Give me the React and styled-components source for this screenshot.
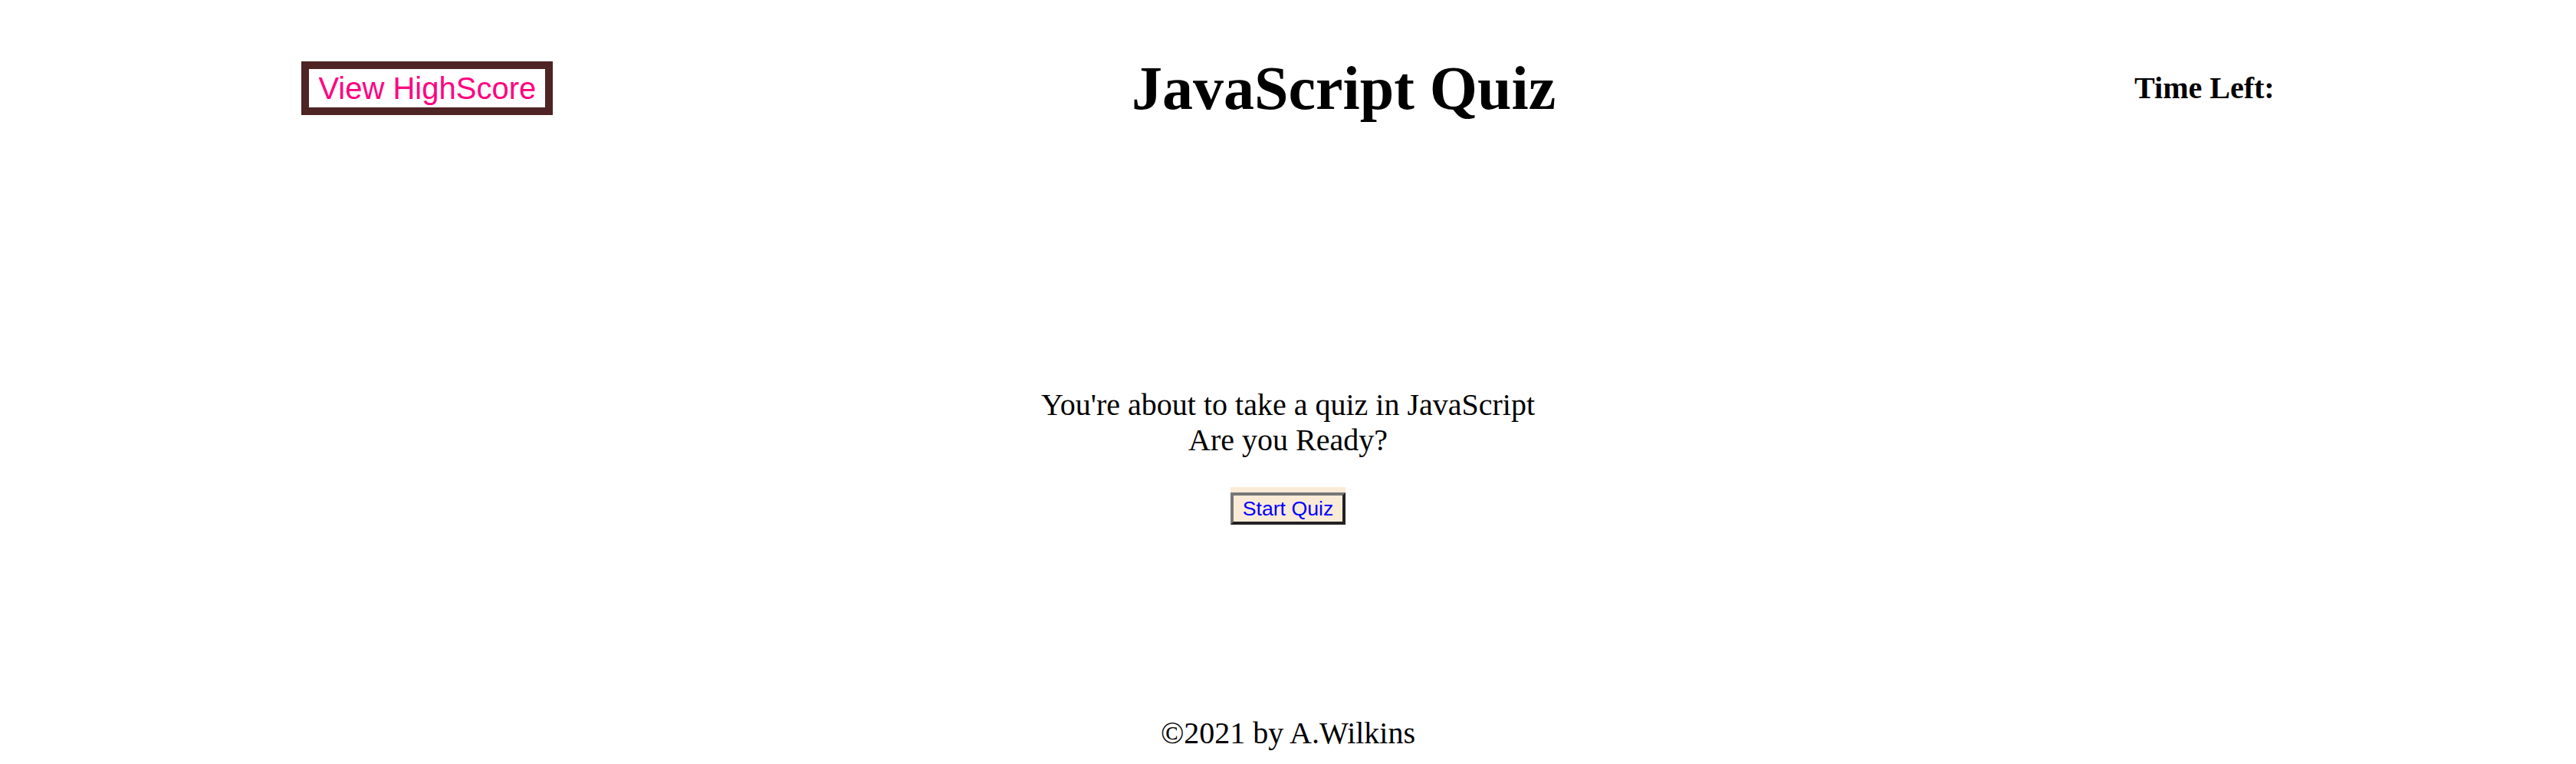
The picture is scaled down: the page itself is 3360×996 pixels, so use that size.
import React from 'react';
import styled, { createGlobalStyle } from 'styled-components';

const GlobalStyle = createGlobalStyle`
  html, body {
    margin: 0;
    padding: 0;
    background: #fff;
  }
  body {
    font-family: "Liberation Serif", "Times New Roman", serif;
    color: #000;
  }
`;

const Page = styled.div`
  min-height: 100vh;
  display: flex;
  flex-direction: column;
  box-sizing: border-box;
`;

const Header = styled.header`
  height: 230px;
  padding: 0 16px;
  display: flex;
  justify-content: space-around;
  align-items: center;
`;

const HighScoreButton = styled.button`
  font-family: "Liberation Sans", Arial, sans-serif;
  font-size: 40px;
  line-height: 46px;
  color: #ff0080;
  background: #fff;
  border: 10px solid #4e2424;
  padding: 2px 12px;
  margin: 0;
  cursor: pointer;
`;

const Title = styled.h1`
  margin: 0;
  font-size: 80px;
  font-weight: bold;
  line-height: 1.1;
`;

const Timer = styled.h3`
  margin: 0;
  font-size: 40px;
  font-weight: bold;
  line-height: 46px;
`;

const Intro = styled.section`
  margin-top: 275px;
  display: flex;
  flex-direction: column;
  align-items: center;
`;

const IntroText = styled.p`
  margin: 0;
  font-size: 40px;
  line-height: 46px;
  text-align: center;
`;

const StartButton = styled.button`
  margin-top: 45px;
  font-family: "Liberation Sans", Arial, sans-serif;
  font-size: 26.67px;
  line-height: 30px;
  color: #0000ff;
  background: antiquewhite;
  border: 4px solid;
  border-color: #767676 #222 #222 #767676;
  box-shadow: 0 -7px 0 antiquewhite;
  padding: 2px 12px;
  cursor: pointer;
`;

const Footer = styled.footer`
  margin-top: auto;
  padding-bottom: 17px;
  font-size: 40px;
  line-height: 46px;
  text-align: center;
`;

export default function App() {
  return (
    <Page>
      <GlobalStyle />
      <Header>
        <HighScoreButton>View HighScore</HighScoreButton>
        <Title>JavaScript Quiz</Title>
        <Timer>Time Left:</Timer>
      </Header>
      <Intro>
        <IntroText>
          You're about to take a quiz in JavaScript
          <br />
          Are you Ready?
        </IntroText>
        <StartButton>Start Quiz</StartButton>
      </Intro>
      <Footer>©2021 by A.Wilkins</Footer>
    </Page>
  );
}
